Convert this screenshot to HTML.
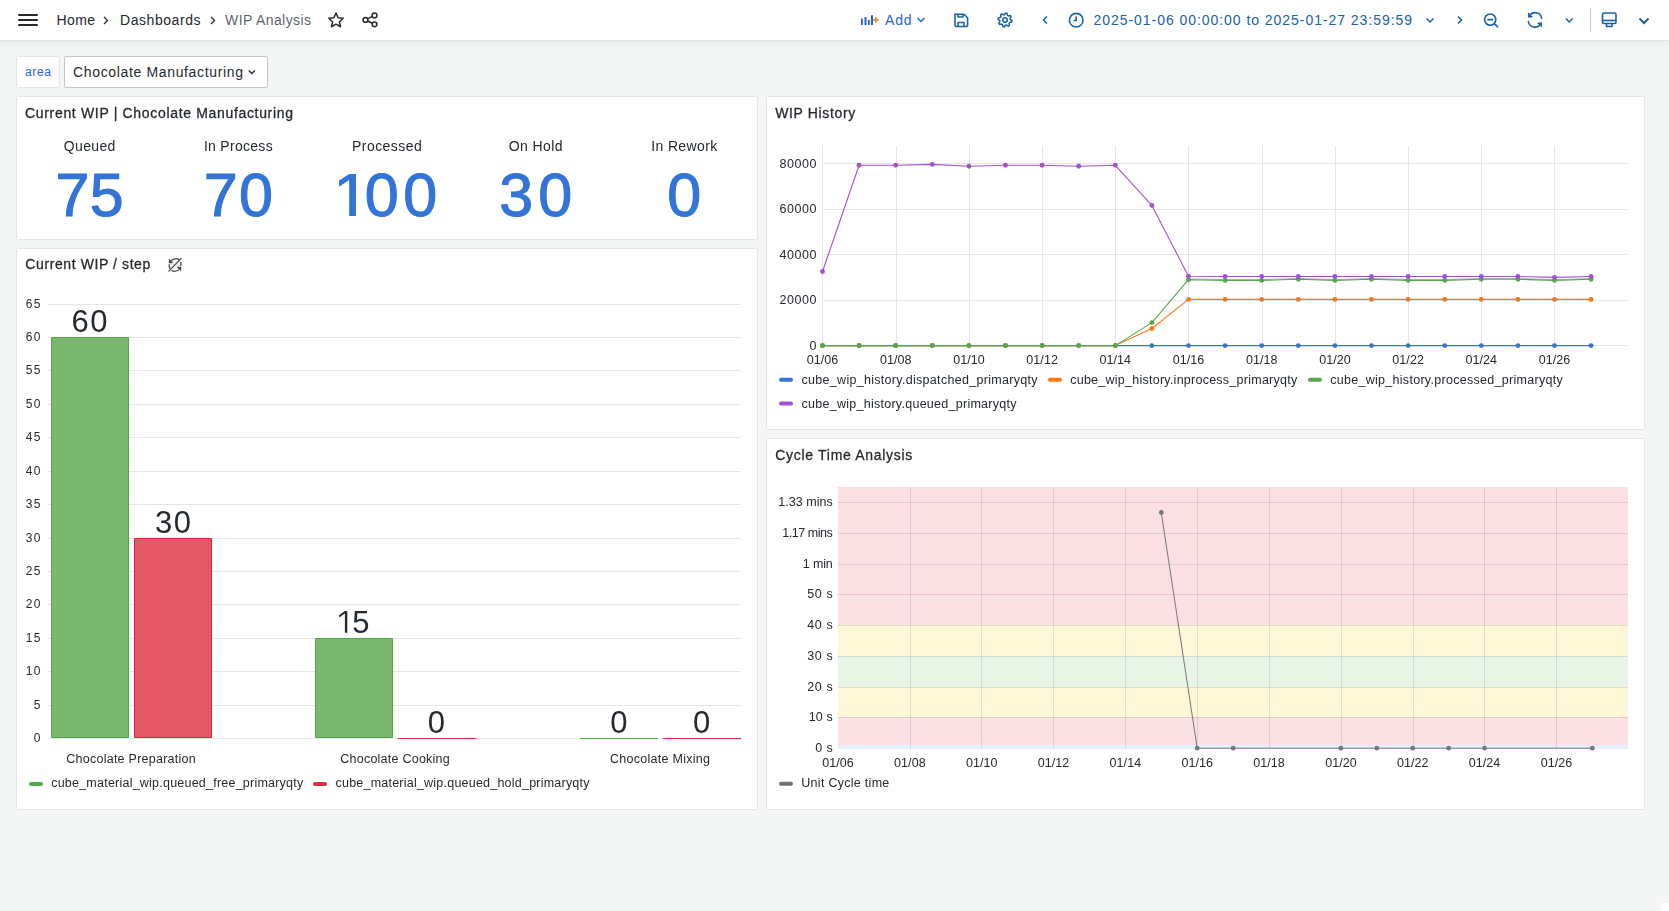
<!DOCTYPE html>
<html><head><meta charset="utf-8"><title>WIP Analysis - Dashboards - Grafana</title>
<style>
html,body{margin:0;padding:0;width:1669px;height:911px;overflow:hidden;background:#F4F5F5;font-family:"Liberation Sans", sans-serif;}
svg text{font-family:"Liberation Sans", sans-serif;}
.abs{position:absolute;}
.hdr{position:absolute;left:0;top:0;width:1669px;height:40px;background:#fff;border-bottom:1px solid #E4E5E6;box-shadow:0 1px 8px rgba(36,41,46,0.08);}
.panel{position:absolute;background:#fff;border:1px solid #E4E5E6;border-radius:2px;box-sizing:border-box;overflow:hidden;}
.panel svg{position:absolute;left:-1px;top:-1px;will-change:transform;}
</style></head><body>
<div class="hdr"><svg width="1669" height="40" viewBox="0 0 1669 40" style="position:absolute;left:0;top:0"><g fill="#24292E"><rect x="18" y="14" width="20" height="2" rx="1"/><rect x="18" y="19" width="20" height="2" rx="1"/><rect x="18" y="24" width="20" height="2" rx="1"/></g><text x="56.5" y="25" font-size="14" fill="#24292E" textLength="38.5" lengthAdjust="spacing">Home</text><path d="M104 17 L107.5 20.5 L104 24" fill="none" stroke="#24292E" stroke-width="1.3"/><text x="120" y="25" font-size="14" fill="#24292E" textLength="80.5" lengthAdjust="spacing">Dashboards</text><path d="M213 17 L216.5 20.5 L213 24" fill="none" stroke="#24292E" stroke-width="1.3" transform="translate(-2,0)"/><text x="225" y="25" font-size="14" fill="rgba(36,41,46,0.75)" textLength="86" lengthAdjust="spacing">WIP Analysis</text><polygon points="336.00,13.00 338.12,17.69 343.23,18.25 339.42,21.71 340.47,26.75 336.00,24.20 331.53,26.75 332.58,21.71 328.77,18.25 333.88,17.69" fill="none" stroke="#24292E" stroke-width="1.5" stroke-linejoin="round"/><g fill="none" stroke="#24292E" stroke-width="1.5"><circle cx="365.5" cy="19.9" r="2.4"/><circle cx="374.5" cy="15.4" r="2.4"/><circle cx="374.5" cy="24.3" r="2.4"/><path d="M367.6 18.8 L372.4 16.4 M367.6 21 L372.4 23.3"/></g><g fill="#1F62E0"><rect x="861" y="18.5" width="1.8" height="6.5"/><rect x="864.5" y="17" width="2" height="8"/><rect x="868" y="20" width="1.8" height="5"/><rect x="871" y="15.2" width="2" height="9.8"/></g><path d="M872.9 19.9 h5.8 M875.8 17 v5.8" stroke="#F5873A" stroke-width="1.7"/><text x="885" y="25" font-size="14" fill="#1F62E0" textLength="26.5" lengthAdjust="spacing">Add</text><path d="M917.5 18 L921 21.5 L924.5 18" fill="none" stroke="#1F62E0" stroke-width="1.5"/><g fill="none" stroke="#1862A8" stroke-width="1.6" stroke-linejoin="round"><path d="M955 14.2 H964 L967.6 17.8 V25 a1.5 1.5 0 0 1 -1.5 1.5 H956.5 a1.5 1.5 0 0 1 -1.5 -1.5 Z"/><path d="M958 14.2 V17 H963 V14.2"/><path d="M958 26.5 V22.5 H964 V26.5"/></g><polygon points="1005.69,13.03 1007.03,13.30 1007.50,15.33 1008.36,15.90 1010.41,15.56 1011.17,16.70 1010.07,18.46 1010.27,19.48 1011.97,20.69 1011.70,22.03 1009.67,22.50 1009.10,23.36 1009.44,25.41 1008.30,26.17 1006.54,25.07 1005.52,25.27 1004.31,26.97 1002.97,26.70 1002.50,24.67 1001.64,24.10 999.59,24.44 998.83,23.30 999.93,21.54 999.73,20.52 998.03,19.31 998.30,17.97 1000.33,17.50 1000.90,16.64 1000.56,14.59 1001.70,13.83 1003.46,14.93 1004.48,14.73" fill="none" stroke="#1862A8" stroke-width="1.5" stroke-linejoin="round"/><circle cx="1005" cy="20" r="2.2" fill="none" stroke="#1862A8" stroke-width="1.6"/><path d="M1047 16.5 L1043.5 20 L1047 23.5" fill="none" stroke="#1862A8" stroke-width="1.6"/><g fill="none" stroke="#1862A8" stroke-width="1.6"><circle cx="1076.2" cy="20.2" r="6.8"/><path d="M1076.2 16.5 V20.5 H1073.5"/></g><text x="1093.5" y="25" font-size="14" fill="#1862A8" textLength="318.5" lengthAdjust="spacing">2025-01-06 00:00:00 to 2025-01-27 23:59:59</text><path d="M1426.5 18.5 L1430 22 L1433.5 18.5" fill="none" stroke="#1862A8" stroke-width="1.5"/><path d="M1458 16.5 L1461.5 20 L1458 23.5" fill="none" stroke="#1862A8" stroke-width="1.6"/><g fill="none" stroke="#1862A8" stroke-width="1.6"><circle cx="1490.2" cy="19.6" r="5.6"/><path d="M1494.3 23.7 L1498 27.2 M1487.3 19.6 H1493.1"/></g><g fill="none" stroke="#1862A8" stroke-width="1.6" stroke-linecap="round"><path d="M1529.6 15.8 A6.5 6.5 0 0 1 1541.6 18.3"/><path d="M1540.4 24 A6.5 6.5 0 0 1 1528.4 21.5"/><path d="M1528.8 13.6 V16.6 H1531.8"/><path d="M1541.2 26.2 V23.2 H1538.2"/></g><path d="M1565.8 18.5 L1569.2 22 L1572.6 18.5" fill="none" stroke="#1862A8" stroke-width="1.5"/><rect x="1590" y="8" width="1" height="24" fill="#C9CACC"/><g fill="none" stroke="#1862A8" stroke-width="1.6" stroke-linejoin="round"><rect x="1602.5" y="13" width="13.5" height="10.5" rx="1.5"/><path d="M1602.5 20.5 H1616"/><path d="M1606.5 23.5 V26.5 H1612 V23.5"/></g><path d="M1639.5 18.5 L1644 23 L1648.5 18.5" fill="none" stroke="#1862A8" stroke-width="2"/></svg></div><div class="abs" style="left:16px;top:56px;width:44px;height:32px;background:#fff;border:1px solid #E4E5E6;border-radius:2px;box-sizing:border-box"></div><div class="abs" style="left:64px;top:56px;width:204px;height:32px;background:#fff;border:1px solid #C3C5C8;border-radius:2px;box-sizing:border-box"></div><svg class="abs" style="left:0;top:40px" width="300" height="56" viewBox="0 40 300 56"><text x="25" y="76" font-size="12" fill="#1F62E0" textLength="26" lengthAdjust="spacing">area</text><text x="73" y="77" font-size="14" fill="#24292E" textLength="170" lengthAdjust="spacing">Chocolate Manufacturing</text><path d="M248.8 70.5 L251.8 73.5 L254.8 70.5" fill="none" stroke="#24292E" stroke-width="1.3"/></svg><div class="panel" style="left:16px;top:96px;width:742px;height:144px"><svg width="742" height="144" viewBox="16 96 742 144"><text x="25" y="117.6" font-size="14" fill="#24292E" textLength="268" lengthAdjust="spacing" stroke="#24292E" stroke-width="0.28">Current WIP | Chocolate Manufacturing</text><text x="89.6" y="151" font-size="14" fill="#24292E" textLength="51.6" lengthAdjust="spacing" text-anchor="middle">Queued</text><text x="89.6" y="216.1" font-size="61" fill="#3274D9" textLength="68" lengthAdjust="spacing" text-anchor="middle" stroke="#3274D9" stroke-width="1.1">75</text><text x="238.3" y="151" font-size="14" fill="#24292E" textLength="68.7" lengthAdjust="spacing" text-anchor="middle">In Process</text><text x="238.3" y="216.1" font-size="61" fill="#3274D9" textLength="69.2" lengthAdjust="spacing" text-anchor="middle" stroke="#3274D9" stroke-width="1.1">70</text><text x="386.9" y="151" font-size="14" fill="#24292E" textLength="69.6" lengthAdjust="spacing" text-anchor="middle">Processed</text><path d="M349.2 173.9 H356 V215.9 H349.2 V179.9 L339.1 186.7 V180.4 Z" fill="#3274D9"/><text x="400.9" y="216.1" font-size="61" fill="#3274D9" textLength="72.5" lengthAdjust="spacing" text-anchor="middle" stroke="#3274D9" stroke-width="1.1">00</text><text x="535.7" y="151" font-size="14" fill="#24292E" textLength="53.8" lengthAdjust="spacing" text-anchor="middle">On Hold</text><text x="535.7" y="216.1" font-size="61" fill="#3274D9" textLength="73" lengthAdjust="spacing" text-anchor="middle" stroke="#3274D9" stroke-width="1.1">30</text><text x="684.2" y="151" font-size="14" fill="#24292E" textLength="65.9" lengthAdjust="spacing" text-anchor="middle">In Rework</text><text x="684.2" y="216.1" font-size="61" fill="#3274D9" textLength="35.9" lengthAdjust="spacing" text-anchor="middle" stroke="#3274D9" stroke-width="1.1">0</text></svg></div><div class="panel" style="left:16px;top:248px;width:742px;height:562px"><svg width="742" height="562" viewBox="16 248 742 562"><text x="25.3" y="269.4" font-size="14" fill="#24292E" textLength="125" lengthAdjust="spacing" stroke="#24292E" stroke-width="0.28">Current WIP / step</text><g fill="none" stroke="#464B50" stroke-width="1.3" stroke-linecap="round"><path d="M171.6 260.6 Q175.5 257.2 179.4 259.9"/><path d="M178.4 270.0 Q175 272.3 172 270.6"/><path d="M169.2 264.6 Q169 266.8 170 268.4"/><path d="M180.8 262.4 Q181.2 264.2 180.7 265.6"/><path d="M168.9 271.1 L181.2 258.4"/></g><path d="M168.8 258.4 L168.8 263.2 L173.6 263.2 Z" fill="#464B50"/><path d="M181.2 271.6 L181.2 266.8 L176.4 266.8 Z" fill="#464B50"/><rect x="47" y="738" width="694" height="1" fill="#E5E6E9"/><text x="40.5" y="742.10" font-size="12" fill="#24292E" text-anchor="end">0</text><rect x="47" y="705" width="694" height="1" fill="#E5E6E9"/><text x="40.5" y="709.10" font-size="12" fill="#24292E" text-anchor="end">5</text><rect x="47" y="671" width="694" height="1" fill="#E5E6E9"/><text x="40.5" y="675.10" font-size="12" fill="#24292E" textLength="14.8" lengthAdjust="spacing" text-anchor="end">10</text><rect x="47" y="638" width="694" height="1" fill="#E5E6E9"/><text x="40.5" y="642.10" font-size="12" fill="#24292E" textLength="14.8" lengthAdjust="spacing" text-anchor="end">15</text><rect x="47" y="604" width="694" height="1" fill="#E5E6E9"/><text x="40.5" y="608.10" font-size="12" fill="#24292E" textLength="14.8" lengthAdjust="spacing" text-anchor="end">20</text><rect x="47" y="571" width="694" height="1" fill="#E5E6E9"/><text x="40.5" y="575.10" font-size="12" fill="#24292E" textLength="14.8" lengthAdjust="spacing" text-anchor="end">25</text><rect x="47" y="538" width="694" height="1" fill="#E5E6E9"/><text x="40.5" y="542.10" font-size="12" fill="#24292E" textLength="14.8" lengthAdjust="spacing" text-anchor="end">30</text><rect x="47" y="504" width="694" height="1" fill="#E5E6E9"/><text x="40.5" y="508.10" font-size="12" fill="#24292E" textLength="14.8" lengthAdjust="spacing" text-anchor="end">35</text><rect x="47" y="471" width="694" height="1" fill="#E5E6E9"/><text x="40.5" y="475.10" font-size="12" fill="#24292E" textLength="14.8" lengthAdjust="spacing" text-anchor="end">40</text><rect x="47" y="437" width="694" height="1" fill="#E5E6E9"/><text x="40.5" y="441.10" font-size="12" fill="#24292E" textLength="14.8" lengthAdjust="spacing" text-anchor="end">45</text><rect x="47" y="404" width="694" height="1" fill="#E5E6E9"/><text x="40.5" y="408.10" font-size="12" fill="#24292E" textLength="14.8" lengthAdjust="spacing" text-anchor="end">50</text><rect x="47" y="370" width="694" height="1" fill="#E5E6E9"/><text x="40.5" y="374.10" font-size="12" fill="#24292E" textLength="14.8" lengthAdjust="spacing" text-anchor="end">55</text><rect x="47" y="337" width="694" height="1" fill="#E5E6E9"/><text x="40.5" y="341.10" font-size="12" fill="#24292E" textLength="14.8" lengthAdjust="spacing" text-anchor="end">60</text><rect x="47" y="304" width="694" height="1" fill="#E5E6E9"/><text x="40.5" y="308.10" font-size="12" fill="#24292E" textLength="14.8" lengthAdjust="spacing" text-anchor="end">65</text><rect x="51" y="337" width="78" height="401" rx="1" fill="#52A447"/><rect x="52" y="338" width="76" height="399" fill="#7AB86F"/><rect x="134" y="538" width="78" height="200" rx="1" fill="#DF253C"/><rect x="135" y="539" width="76" height="198" fill="#E45767"/><rect x="315" y="638" width="78" height="100" rx="1" fill="#52A447"/><rect x="316" y="639" width="76" height="98" fill="#7AB86F"/><rect x="398" y="738" width="78" height="1" fill="#DF253C"/><rect x="580" y="738" width="78" height="1" fill="#52A447"/><rect x="663" y="738" width="78" height="1" fill="#DF253C"/><text x="89.6" y="332.3" font-size="31" fill="#24292E" textLength="36" lengthAdjust="spacing" text-anchor="middle">60</text><text x="173" y="533.0" font-size="31" fill="#24292E" textLength="36" lengthAdjust="spacing" text-anchor="middle">30</text><text x="436.4" y="733.0" font-size="31" fill="#24292E" textLength="18" lengthAdjust="spacing" text-anchor="middle">0</text><text x="618.8" y="733.0" font-size="31" fill="#24292E" textLength="18" lengthAdjust="spacing" text-anchor="middle">0</text><text x="701.6" y="733.0" font-size="31" fill="#24292E" textLength="18" lengthAdjust="spacing" text-anchor="middle">0</text><path d="M344.9 611.1 H347.3 V632.7 H344.9 V613.6 L339.1 617.6 V615.2 Z" fill="#24292E"/><text x="360.9" y="632.6" font-size="31" fill="#24292E" text-anchor="middle">5</text><text x="131" y="763.2" font-size="12.5" fill="#24292E" textLength="129.5" lengthAdjust="spacing" text-anchor="middle">Chocolate Preparation</text><text x="395" y="763.2" font-size="12.5" fill="#24292E" textLength="109.5" lengthAdjust="spacing" text-anchor="middle">Chocolate Cooking</text><text x="660" y="763.2" font-size="12.5" fill="#24292E" textLength="100" lengthAdjust="spacing" text-anchor="middle">Chocolate Mixing</text><rect x="29" y="782" width="14" height="4" rx="2" fill="#56A64B"/><text x="51.2" y="787" font-size="12.5" fill="#24292E" textLength="252" lengthAdjust="spacing">cube_material_wip.queued_free_primaryqty</text><rect x="313" y="782" width="14" height="4" rx="2" fill="#E02F44"/><text x="335.5" y="787" font-size="12.5" fill="#24292E" textLength="254" lengthAdjust="spacing">cube_material_wip.queued_hold_primaryqty</text></svg></div><div class="panel" style="left:766px;top:96px;width:879px;height:334px"><svg width="879" height="334" viewBox="766 96 879 334"><text x="775.2" y="118.3" font-size="14" fill="#24292E" textLength="80" lengthAdjust="spacing" stroke="#24292E" stroke-width="0.28">WIP History</text><rect x="822" y="146" width="1" height="200" fill="#E5E6E9"/><text x="822.50" y="363.7" font-size="12.5" fill="#24292E" textLength="31.5" lengthAdjust="spacing" text-anchor="middle">01/06</text><rect x="896" y="146" width="1" height="200" fill="#E5E6E9"/><text x="895.70" y="363.7" font-size="12.5" fill="#24292E" textLength="31.5" lengthAdjust="spacing" text-anchor="middle">01/08</text><rect x="969" y="146" width="1" height="200" fill="#E5E6E9"/><text x="968.90" y="363.7" font-size="12.5" fill="#24292E" textLength="31.5" lengthAdjust="spacing" text-anchor="middle">01/10</text><rect x="1042" y="146" width="1" height="200" fill="#E5E6E9"/><text x="1042.10" y="363.7" font-size="12.5" fill="#24292E" textLength="31.5" lengthAdjust="spacing" text-anchor="middle">01/12</text><rect x="1115" y="146" width="1" height="200" fill="#E5E6E9"/><text x="1115.30" y="363.7" font-size="12.5" fill="#24292E" textLength="31.5" lengthAdjust="spacing" text-anchor="middle">01/14</text><rect x="1188" y="146" width="1" height="200" fill="#E5E6E9"/><text x="1188.50" y="363.7" font-size="12.5" fill="#24292E" textLength="31.5" lengthAdjust="spacing" text-anchor="middle">01/16</text><rect x="1262" y="146" width="1" height="200" fill="#E5E6E9"/><text x="1261.70" y="363.7" font-size="12.5" fill="#24292E" textLength="31.5" lengthAdjust="spacing" text-anchor="middle">01/18</text><rect x="1335" y="146" width="1" height="200" fill="#E5E6E9"/><text x="1334.90" y="363.7" font-size="12.5" fill="#24292E" textLength="31.5" lengthAdjust="spacing" text-anchor="middle">01/20</text><rect x="1408" y="146" width="1" height="200" fill="#E5E6E9"/><text x="1408.10" y="363.7" font-size="12.5" fill="#24292E" textLength="31.5" lengthAdjust="spacing" text-anchor="middle">01/22</text><rect x="1481" y="146" width="1" height="200" fill="#E5E6E9"/><text x="1481.30" y="363.7" font-size="12.5" fill="#24292E" textLength="31.5" lengthAdjust="spacing" text-anchor="middle">01/24</text><rect x="1554" y="146" width="1" height="200" fill="#E5E6E9"/><text x="1554.50" y="363.7" font-size="12.5" fill="#24292E" textLength="31.5" lengthAdjust="spacing" text-anchor="middle">01/26</text><rect x="822" y="345" width="806" height="1" fill="#E5E6E9"/><text x="816.5" y="349.90" font-size="12.5" fill="#24292E" text-anchor="end">0</text><rect x="822" y="300" width="806" height="1" fill="#E5E6E9"/><text x="816.5" y="304.43" font-size="12.5" fill="#24292E" textLength="37" lengthAdjust="spacing" text-anchor="end">20000</text><rect x="822" y="254" width="806" height="1" fill="#E5E6E9"/><text x="816.5" y="258.95" font-size="12.5" fill="#24292E" textLength="37" lengthAdjust="spacing" text-anchor="end">40000</text><rect x="822" y="209" width="806" height="1" fill="#E5E6E9"/><text x="816.5" y="213.48" font-size="12.5" fill="#24292E" textLength="37" lengthAdjust="spacing" text-anchor="end">60000</text><rect x="822" y="163" width="806" height="1" fill="#E5E6E9"/><text x="816.5" y="168.00" font-size="12.5" fill="#24292E" textLength="37" lengthAdjust="spacing" text-anchor="end">80000</text><polyline points="822.50,345.60 859.10,345.60 895.70,345.60 932.30,345.60 968.90,345.60 1005.50,345.60 1042.10,345.60 1078.70,345.60 1115.30,345.60 1151.90,345.60 1188.50,345.60 1225.10,345.60 1261.70,345.60 1298.30,345.60 1334.90,345.60 1371.50,345.60 1408.10,345.60 1444.70,345.60 1481.30,345.60 1517.90,345.60 1554.50,345.60 1591.10,345.60" fill="none" stroke="#3871DC" stroke-width="1.1" stroke-linejoin="round"/><circle cx="822.50" cy="345.60" r="2.45" fill="#3871DC"/><circle cx="859.10" cy="345.60" r="2.45" fill="#3871DC"/><circle cx="895.70" cy="345.60" r="2.45" fill="#3871DC"/><circle cx="932.30" cy="345.60" r="2.45" fill="#3871DC"/><circle cx="968.90" cy="345.60" r="2.45" fill="#3871DC"/><circle cx="1005.50" cy="345.60" r="2.45" fill="#3871DC"/><circle cx="1042.10" cy="345.60" r="2.45" fill="#3871DC"/><circle cx="1078.70" cy="345.60" r="2.45" fill="#3871DC"/><circle cx="1115.30" cy="345.60" r="2.45" fill="#3871DC"/><circle cx="1151.90" cy="345.60" r="2.45" fill="#3871DC"/><circle cx="1188.50" cy="345.60" r="2.45" fill="#3871DC"/><circle cx="1225.10" cy="345.60" r="2.45" fill="#3871DC"/><circle cx="1261.70" cy="345.60" r="2.45" fill="#3871DC"/><circle cx="1298.30" cy="345.60" r="2.45" fill="#3871DC"/><circle cx="1334.90" cy="345.60" r="2.45" fill="#3871DC"/><circle cx="1371.50" cy="345.60" r="2.45" fill="#3871DC"/><circle cx="1408.10" cy="345.60" r="2.45" fill="#3871DC"/><circle cx="1444.70" cy="345.60" r="2.45" fill="#3871DC"/><circle cx="1481.30" cy="345.60" r="2.45" fill="#3871DC"/><circle cx="1517.90" cy="345.60" r="2.45" fill="#3871DC"/><circle cx="1554.50" cy="345.60" r="2.45" fill="#3871DC"/><circle cx="1591.10" cy="345.60" r="2.45" fill="#3871DC"/><polyline points="822.50,345.60 859.10,345.60 895.70,345.60 932.30,345.60 968.90,345.60 1005.50,345.60 1042.10,345.60 1078.70,345.60 1115.30,345.60 1151.90,328.50 1188.50,299.40 1225.10,299.40 1261.70,299.40 1298.30,299.40 1334.90,299.40 1371.50,299.40 1408.10,299.40 1444.70,299.40 1481.30,299.40 1517.90,299.40 1554.50,299.40 1591.10,299.40" fill="none" stroke="#FF780A" stroke-width="1.1" stroke-linejoin="round"/><circle cx="822.50" cy="345.60" r="2.45" fill="#FF780A"/><circle cx="859.10" cy="345.60" r="2.45" fill="#FF780A"/><circle cx="895.70" cy="345.60" r="2.45" fill="#FF780A"/><circle cx="932.30" cy="345.60" r="2.45" fill="#FF780A"/><circle cx="968.90" cy="345.60" r="2.45" fill="#FF780A"/><circle cx="1005.50" cy="345.60" r="2.45" fill="#FF780A"/><circle cx="1042.10" cy="345.60" r="2.45" fill="#FF780A"/><circle cx="1078.70" cy="345.60" r="2.45" fill="#FF780A"/><circle cx="1115.30" cy="345.60" r="2.45" fill="#FF780A"/><circle cx="1151.90" cy="328.50" r="2.45" fill="#FF780A"/><circle cx="1188.50" cy="299.40" r="2.45" fill="#FF780A"/><circle cx="1225.10" cy="299.40" r="2.45" fill="#FF780A"/><circle cx="1261.70" cy="299.40" r="2.45" fill="#FF780A"/><circle cx="1298.30" cy="299.40" r="2.45" fill="#FF780A"/><circle cx="1334.90" cy="299.40" r="2.45" fill="#FF780A"/><circle cx="1371.50" cy="299.40" r="2.45" fill="#FF780A"/><circle cx="1408.10" cy="299.40" r="2.45" fill="#FF780A"/><circle cx="1444.70" cy="299.40" r="2.45" fill="#FF780A"/><circle cx="1481.30" cy="299.40" r="2.45" fill="#FF780A"/><circle cx="1517.90" cy="299.40" r="2.45" fill="#FF780A"/><circle cx="1554.50" cy="299.40" r="2.45" fill="#FF780A"/><circle cx="1591.10" cy="299.40" r="2.45" fill="#FF780A"/><polyline points="1188.50,278.90 1225.10,279.60 1261.70,279.60 1298.30,278.50 1334.90,279.60 1371.50,278.50 1408.10,279.60 1444.70,279.60 1481.30,278.50 1517.90,278.50 1554.50,279.60 1591.10,278.50" fill="none" stroke="#B5B5B5" stroke-width="1"/><polyline points="822.50,345.60 859.10,345.60 895.70,345.60 932.30,345.60 968.90,345.60 1005.50,345.60 1042.10,345.60 1078.70,345.60 1115.30,345.60 1151.90,322.60 1188.50,279.70 1225.10,280.40 1261.70,280.40 1298.30,279.30 1334.90,280.40 1371.50,279.30 1408.10,280.40 1444.70,280.40 1481.30,279.30 1517.90,279.30 1554.50,280.40 1591.10,279.30" fill="none" stroke="#56A64B" stroke-width="1.1" stroke-linejoin="round"/><circle cx="822.50" cy="345.60" r="2.45" fill="#56A64B"/><circle cx="859.10" cy="345.60" r="2.45" fill="#56A64B"/><circle cx="895.70" cy="345.60" r="2.45" fill="#56A64B"/><circle cx="932.30" cy="345.60" r="2.45" fill="#56A64B"/><circle cx="968.90" cy="345.60" r="2.45" fill="#56A64B"/><circle cx="1005.50" cy="345.60" r="2.45" fill="#56A64B"/><circle cx="1042.10" cy="345.60" r="2.45" fill="#56A64B"/><circle cx="1078.70" cy="345.60" r="2.45" fill="#56A64B"/><circle cx="1115.30" cy="345.60" r="2.45" fill="#56A64B"/><circle cx="1151.90" cy="322.60" r="2.45" fill="#56A64B"/><circle cx="1188.50" cy="279.70" r="2.45" fill="#56A64B"/><circle cx="1225.10" cy="280.40" r="2.45" fill="#56A64B"/><circle cx="1261.70" cy="280.40" r="2.45" fill="#56A64B"/><circle cx="1298.30" cy="279.30" r="2.45" fill="#56A64B"/><circle cx="1334.90" cy="280.40" r="2.45" fill="#56A64B"/><circle cx="1371.50" cy="279.30" r="2.45" fill="#56A64B"/><circle cx="1408.10" cy="280.40" r="2.45" fill="#56A64B"/><circle cx="1444.70" cy="280.40" r="2.45" fill="#56A64B"/><circle cx="1481.30" cy="279.30" r="2.45" fill="#56A64B"/><circle cx="1517.90" cy="279.30" r="2.45" fill="#56A64B"/><circle cx="1554.50" cy="280.40" r="2.45" fill="#56A64B"/><circle cx="1591.10" cy="279.30" r="2.45" fill="#56A64B"/><polyline points="822.50,271.50 859.10,165.30 895.70,165.30 932.30,164.40 968.90,166.30 1005.50,165.30 1042.10,165.30 1078.70,166.30 1115.30,165.30 1151.90,205.40 1188.50,276.30 1225.10,276.50 1261.70,276.50 1298.30,276.50 1334.90,276.50 1371.50,276.50 1408.10,276.50 1444.70,276.50 1481.30,276.50 1517.90,276.50 1554.50,277.40 1591.10,276.50" fill="none" stroke="#A352CC" stroke-width="1.1" stroke-linejoin="round"/><circle cx="822.50" cy="271.50" r="2.45" fill="#A352CC"/><circle cx="859.10" cy="165.30" r="2.45" fill="#A352CC"/><circle cx="895.70" cy="165.30" r="2.45" fill="#A352CC"/><circle cx="932.30" cy="164.40" r="2.45" fill="#A352CC"/><circle cx="968.90" cy="166.30" r="2.45" fill="#A352CC"/><circle cx="1005.50" cy="165.30" r="2.45" fill="#A352CC"/><circle cx="1042.10" cy="165.30" r="2.45" fill="#A352CC"/><circle cx="1078.70" cy="166.30" r="2.45" fill="#A352CC"/><circle cx="1115.30" cy="165.30" r="2.45" fill="#A352CC"/><circle cx="1151.90" cy="205.40" r="2.45" fill="#A352CC"/><circle cx="1188.50" cy="276.30" r="2.45" fill="#A352CC"/><circle cx="1225.10" cy="276.50" r="2.45" fill="#A352CC"/><circle cx="1261.70" cy="276.50" r="2.45" fill="#A352CC"/><circle cx="1298.30" cy="276.50" r="2.45" fill="#A352CC"/><circle cx="1334.90" cy="276.50" r="2.45" fill="#A352CC"/><circle cx="1371.50" cy="276.50" r="2.45" fill="#A352CC"/><circle cx="1408.10" cy="276.50" r="2.45" fill="#A352CC"/><circle cx="1444.70" cy="276.50" r="2.45" fill="#A352CC"/><circle cx="1481.30" cy="276.50" r="2.45" fill="#A352CC"/><circle cx="1517.90" cy="276.50" r="2.45" fill="#A352CC"/><circle cx="1554.50" cy="277.40" r="2.45" fill="#A352CC"/><circle cx="1591.10" cy="276.50" r="2.45" fill="#A352CC"/><rect x="779" y="377.8" width="14" height="4" rx="2" fill="#3871DC"/><text x="801.5" y="383.8" font-size="12.5" fill="#24292E" textLength="236" lengthAdjust="spacing">cube_wip_history.dispatched_primaryqty</text><rect x="1048" y="377.8" width="14" height="4" rx="2" fill="#FF780A"/><text x="1070.2" y="383.8" font-size="12.5" fill="#24292E" textLength="227" lengthAdjust="spacing">cube_wip_history.inprocess_primaryqty</text><rect x="1308" y="377.8" width="14" height="4" rx="2" fill="#56A64B"/><text x="1330.2" y="383.8" font-size="12.5" fill="#24292E" textLength="232.5" lengthAdjust="spacing">cube_wip_history.processed_primaryqty</text><rect x="779" y="401.5" width="14" height="4" rx="2" fill="#A352CC"/><text x="801.5" y="407.5" font-size="12.5" fill="#24292E" textLength="215" lengthAdjust="spacing">cube_wip_history.queued_primaryqty</text></svg></div><div class="panel" style="left:766px;top:438px;width:879px;height:372px"><svg width="879" height="372" viewBox="766 438 879 372"><text x="775.3" y="460.2" font-size="14" fill="#24292E" textLength="137" lengthAdjust="spacing" stroke="#24292E" stroke-width="0.28">Cycle Time Analysis</text><rect x="838" y="487" width="790" height="262" fill="#fff"/><rect x="838" y="487" width="790" height="138" fill="rgba(242,73,92,0.17)"/><rect x="838" y="625" width="790" height="31" fill="rgba(250,222,100,0.25)"/><rect x="838" y="656" width="790" height="31" fill="rgba(115,191,105,0.17)"/><rect x="838" y="687" width="790" height="30" fill="rgba(250,222,100,0.25)"/><rect x="838" y="717" width="790" height="28" fill="rgba(242,73,92,0.17)"/><rect x="838" y="745" width="790" height="4" fill="rgba(138,184,255,0.22)"/><text x="838.00" y="767" font-size="12.5" fill="#24292E" textLength="31.5" lengthAdjust="spacing" text-anchor="middle">01/06</text><rect x="910" y="487" width="1" height="262" fill="rgba(36,41,46,0.12)"/><text x="909.84" y="767" font-size="12.5" fill="#24292E" textLength="31.5" lengthAdjust="spacing" text-anchor="middle">01/08</text><rect x="981" y="487" width="1" height="262" fill="rgba(36,41,46,0.12)"/><text x="981.68" y="767" font-size="12.5" fill="#24292E" textLength="31.5" lengthAdjust="spacing" text-anchor="middle">01/10</text><rect x="1053" y="487" width="1" height="262" fill="rgba(36,41,46,0.12)"/><text x="1053.52" y="767" font-size="12.5" fill="#24292E" textLength="31.5" lengthAdjust="spacing" text-anchor="middle">01/12</text><rect x="1125" y="487" width="1" height="262" fill="rgba(36,41,46,0.12)"/><text x="1125.36" y="767" font-size="12.5" fill="#24292E" textLength="31.5" lengthAdjust="spacing" text-anchor="middle">01/14</text><rect x="1197" y="487" width="1" height="262" fill="rgba(36,41,46,0.12)"/><text x="1197.20" y="767" font-size="12.5" fill="#24292E" textLength="31.5" lengthAdjust="spacing" text-anchor="middle">01/16</text><rect x="1269" y="487" width="1" height="262" fill="rgba(36,41,46,0.12)"/><text x="1269.04" y="767" font-size="12.5" fill="#24292E" textLength="31.5" lengthAdjust="spacing" text-anchor="middle">01/18</text><rect x="1341" y="487" width="1" height="262" fill="rgba(36,41,46,0.12)"/><text x="1340.88" y="767" font-size="12.5" fill="#24292E" textLength="31.5" lengthAdjust="spacing" text-anchor="middle">01/20</text><rect x="1413" y="487" width="1" height="262" fill="rgba(36,41,46,0.12)"/><text x="1412.72" y="767" font-size="12.5" fill="#24292E" textLength="31.5" lengthAdjust="spacing" text-anchor="middle">01/22</text><rect x="1484" y="487" width="1" height="262" fill="rgba(36,41,46,0.12)"/><text x="1484.56" y="767" font-size="12.5" fill="#24292E" textLength="31.5" lengthAdjust="spacing" text-anchor="middle">01/24</text><rect x="1556" y="487" width="1" height="262" fill="rgba(36,41,46,0.12)"/><text x="1556.40" y="767" font-size="12.5" fill="#24292E" textLength="31.5" lengthAdjust="spacing" text-anchor="middle">01/26</text><text x="832.8" y="752.00" font-size="12.5" fill="#24292E" textLength="17.5" lengthAdjust="spacing" text-anchor="end">0 s</text><rect x="838" y="717" width="790" height="1" fill="rgba(36,41,46,0.12)"/><text x="832.8" y="721.00" font-size="12.5" fill="#24292E" textLength="24" lengthAdjust="spacing" text-anchor="end">10 s</text><rect x="838" y="687" width="790" height="1" fill="rgba(36,41,46,0.12)"/><text x="832.8" y="691.00" font-size="12.5" fill="#24292E" textLength="25.5" lengthAdjust="spacing" text-anchor="end">20 s</text><rect x="838" y="656" width="790" height="1" fill="rgba(36,41,46,0.12)"/><text x="832.8" y="660.00" font-size="12.5" fill="#24292E" textLength="25.5" lengthAdjust="spacing" text-anchor="end">30 s</text><rect x="838" y="625" width="790" height="1" fill="rgba(36,41,46,0.12)"/><text x="832.8" y="629.00" font-size="12.5" fill="#24292E" textLength="25.5" lengthAdjust="spacing" text-anchor="end">40 s</text><rect x="838" y="594" width="790" height="1" fill="rgba(36,41,46,0.12)"/><text x="832.8" y="598.00" font-size="12.5" fill="#24292E" textLength="25.5" lengthAdjust="spacing" text-anchor="end">50 s</text><rect x="838" y="564" width="790" height="1" fill="rgba(36,41,46,0.12)"/><text x="832.8" y="568.00" font-size="12.5" fill="#24292E" textLength="30" lengthAdjust="spacing" text-anchor="end">1 min</text><rect x="838" y="533" width="790" height="1" fill="rgba(36,41,46,0.12)"/><text x="832.8" y="537.00" font-size="12.5" fill="#24292E" textLength="50.5" lengthAdjust="spacing" text-anchor="end">1.17 mins</text><rect x="838" y="502" width="790" height="1" fill="rgba(36,41,46,0.12)"/><text x="832.8" y="506.00" font-size="12.5" fill="#24292E" textLength="54.5" lengthAdjust="spacing" text-anchor="end">1.33 mins</text><polyline points="1161.28,512.50 1197.20,748.20 1233.12,748.20 1340.88,748.20 1376.80,748.20 1412.72,748.20 1448.64,748.20 1484.56,748.20 1592.32,748.20" fill="none" stroke="#74777B" stroke-width="1"/><circle cx="1161.28" cy="512.50" r="2.4" fill="#74777B"/><circle cx="1197.20" cy="748.20" r="2.4" fill="#74777B"/><circle cx="1233.12" cy="748.20" r="2.4" fill="#74777B"/><circle cx="1340.88" cy="748.20" r="2.4" fill="#74777B"/><circle cx="1376.80" cy="748.20" r="2.4" fill="#74777B"/><circle cx="1412.72" cy="748.20" r="2.4" fill="#74777B"/><circle cx="1448.64" cy="748.20" r="2.4" fill="#74777B"/><circle cx="1484.56" cy="748.20" r="2.4" fill="#74777B"/><circle cx="1592.32" cy="748.20" r="2.4" fill="#74777B"/><rect x="779" y="781.8" width="14" height="4" rx="2" fill="#6E7175"/><text x="801.3" y="787.3" font-size="12.5" fill="#24292E" textLength="88" lengthAdjust="spacing">Unit Cycle time</text></svg></div><div class="abs" style="left:1661px;top:903px;width:8px;height:8px;background:#fff"></div>
</body></html>
